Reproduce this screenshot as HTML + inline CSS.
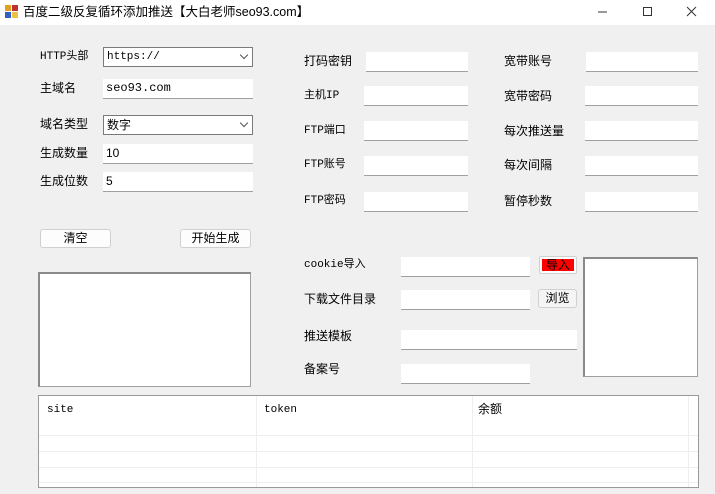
<!DOCTYPE html>
<html><head><meta charset="utf-8"><style>
*{margin:0;padding:0;box-sizing:border-box}
body{width:715px;height:494px;overflow:hidden;background:#f0f0f0;font-family:"Liberation Sans","Noto Sans CJK SC",sans-serif;font-size:12px;color:#000;position:relative}
.a{position:absolute}
.title{left:0;top:0;width:715px;height:25px;background:#fff}
.lbl{position:absolute;font-size:12px;line-height:14px;white-space:nowrap}
.mono{font-family:"Liberation Mono","Noto Sans CJK SC",monospace;font-size:11px}
.tb{position:absolute;background:#fff;border-bottom:1px solid #a0a0a0;height:20px;padding-left:3px;line-height:19px;font-size:12px}
.cb{position:absolute;background:#fff;border:1px solid #7a7a7a;height:20px;padding-left:3px;line-height:18px}
.cb:after{content:"";position:absolute;right:5px;top:4px;width:5px;height:5px;border-right:1px solid #555;border-bottom:1px solid #555;transform:rotate(45deg)}
.btn{position:absolute;background:#fdfdfd;border:1px solid #d0d0d0;border-radius:3px;text-align:center;line-height:17px}
.lb{position:absolute;background:#fff;border:1px solid #a0a0a0;border-top:2px solid #8a8a8a;border-left:2px solid #8a8a8a}
</style></head><body>
<div class="a title"></div>
<svg class="a" style="left:5px;top:5px" width="14" height="14"><rect x="0" y="0" width="6" height="6" fill="#e0a020"/><rect x="7" y="0" width="6" height="6" fill="#c03030"/><rect x="0" y="7" width="6" height="6" fill="#3060c0"/><rect x="7" y="7" width="6" height="6" fill="#f0c040"/></svg>
<div class="lbl" style="left:23px;top:5px;font-size:12.5px">百度二级反复循环添加推送【大白老师seo93.com】</div>
<svg class="a" style="left:590px;top:5px" width="120" height="14"><line x1="8" y1="7" x2="17" y2="7" stroke="#333"/><rect x="53.5" y="2.5" width="8" height="8" fill="none" stroke="#333"/><path d="M97 2 L106 11 M106 2 L97 11" stroke="#333"/></svg>

<div class="lbl mono" style="left:40px;top:50px">HTTP头部</div>
<div class="cb mono" style="left:103px;top:47px;width:150px">https://</div>
<div class="lbl" style="left:40px;top:81px">主域名</div>
<div class="tb mono" style="left:103px;top:79px;width:150px">seo93.com</div>
<div class="lbl" style="left:40px;top:117px">域名类型</div>
<div class="cb" style="left:103px;top:115px;width:150px">数字</div>
<div class="lbl" style="left:40px;top:146px">生成数量</div>
<div class="tb" style="left:103px;top:144px;width:150px">10</div>
<div class="lbl" style="left:40px;top:174px">生成位数</div>
<div class="tb" style="left:103px;top:172px;width:150px">5</div>
<div class="btn" style="left:40px;top:229px;width:71px;height:19px">清空</div>
<div class="btn" style="left:180px;top:229px;width:71px;height:19px">开始生成</div>
<div class="lb" style="left:38px;top:272px;width:213px;height:115px"></div>

<div class="lbl" style="left:304px;top:54px">打码密钥</div>
<div class="tb" style="left:366px;top:52px;width:102px"></div>
<div class="lbl mono" style="left:304px;top:89px">主机IP</div>
<div class="tb" style="left:364px;top:86px;width:104px"></div>
<div class="lbl mono" style="left:304px;top:124px">FTP端口</div>
<div class="tb" style="left:364px;top:121px;width:104px"></div>
<div class="lbl mono" style="left:304px;top:158px">FTP账号</div>
<div class="tb" style="left:364px;top:156px;width:104px"></div>
<div class="lbl mono" style="left:304px;top:194px">FTP密码</div>
<div class="tb" style="left:364px;top:192px;width:104px"></div>

<div class="lbl" style="left:504px;top:54px">宽带账号</div>
<div class="tb" style="left:586px;top:52px;width:112px"></div>
<div class="lbl" style="left:504px;top:89px">宽带密码</div>
<div class="tb" style="left:585px;top:86px;width:113px"></div>
<div class="lbl" style="left:504px;top:124px">每次推送量</div>
<div class="tb" style="left:585px;top:121px;width:113px"></div>
<div class="lbl" style="left:504px;top:158px">每次间隔</div>
<div class="tb" style="left:585px;top:156px;width:113px"></div>
<div class="lbl" style="left:504px;top:194px">暂停秒数</div>
<div class="tb" style="left:585px;top:192px;width:113px"></div>

<div class="lbl mono" style="left:304px;top:258px">cookie导入</div>
<div class="tb" style="left:401px;top:257px;width:129px"></div>
<div class="btn" style="left:539px;top:256px;width:38px;height:18px;border-radius:2px;padding:2px"><div style="background:#f00;height:12px;line-height:12px">导入</div></div>
<div class="lbl" style="left:304px;top:292px">下载文件目录</div>
<div class="tb" style="left:401px;top:290px;width:129px"></div>
<div class="btn" style="left:538px;top:289px;width:39px;height:19px;background:#f5f5f5">浏览</div>
<div class="lbl" style="left:304px;top:329px">推送模板</div>
<div class="tb" style="left:401px;top:330px;width:176px"></div>
<div class="lbl" style="left:304px;top:362px">备案号</div>
<div class="tb" style="left:401px;top:364px;width:129px"></div>
<div class="lb" style="left:583px;top:257px;width:115px;height:120px"></div>

<div class="a" style="left:38px;top:395px;width:661px;height:93px;background:#fff;border:1px solid #999">
<div class="lbl mono" style="left:8px;top:7px">site</div>
<div class="lbl mono" style="left:225px;top:7px">token</div>
<div class="lbl" style="left:439px;top:6px">余额</div>
<div class="a" style="left:217px;top:0;width:1px;height:91px;background:#eee"></div>
<div class="a" style="left:433px;top:0;width:1px;height:91px;background:#eee"></div>
<div class="a" style="left:649px;top:0;width:1px;height:91px;background:#eee"></div>
<div class="a" style="left:0;top:39px;width:659px;height:1px;background:#eee"></div>
<div class="a" style="left:0;top:55px;width:659px;height:1px;background:#eee"></div>
<div class="a" style="left:0;top:71px;width:659px;height:1px;background:#eee"></div>
<div class="a" style="left:0;top:86px;width:659px;height:1px;background:#eee"></div>
</div>
</body></html>
